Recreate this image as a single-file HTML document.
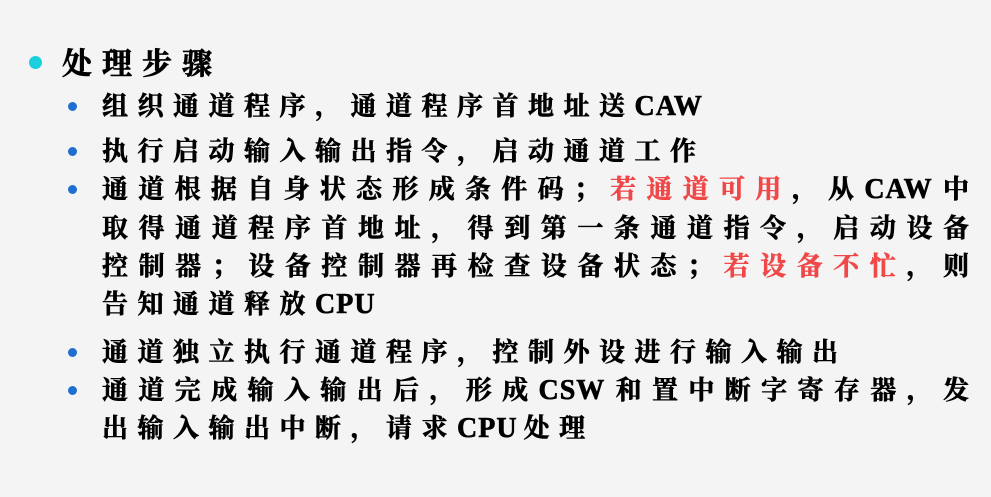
<!DOCTYPE html>
<html><head><meta charset="utf-8"><style>
html,body{margin:0;padding:0}
body{width:991px;height:497px;background:#f4f4f4;position:relative;overflow:hidden;font-family:"Liberation Serif","Noto Serif CJK SC",serif;font-weight:bold;color:#000}
.l{position:absolute;left:102px;height:38px;line-height:38px;font-size:26px;letter-spacing:9.5px;white-space:nowrap;-webkit-text-stroke:0.6px #000}
.j{width:873px;text-align:justify;text-align-last:justify;letter-spacing:6px}
.r{color:#f04848;-webkit-text-stroke:0.6px #f04848}
.e{letter-spacing:1px;margin-right:6px;font-size:28px}
.b{position:absolute;width:9px;height:9px;border-radius:50%;background:#1f6fd0;left:68px}
.t{position:absolute;left:62px;top:46px;height:38px;line-height:38px;font-size:30px;letter-spacing:10px;-webkit-text-stroke:0.7px #000}
.cb{position:absolute;left:29px;top:56px;width:13px;height:13px;border-radius:50%;background:#1ccfdc}
</style></head><body>
<div class="cb"></div>
<div class="t">处理步骤</div>
<div class="b" style="top:102px"></div>
<div class="l" style="top:88px">组织通道程序，通道程序首地址送<span class="e">CAW</span></div>
<div class="b" style="top:147px"></div>
<div class="l" style="top:133px">执行启动输入输出指令，启动通道工作</div>
<div class="b" style="top:185px"></div>
<div class="l j" style="top:171px">通道根据自身状态形成条件码；<span class="r">若通道可用</span>，从<span class="e">CAW</span>中</div>
<div class="l j" style="top:210px">取得通道程序首地址，得到第一条通道指令，启动设备</div>
<div class="l j" style="top:248px">控制器；设备控制器再检查设备状态；<span class="r">若设备不忙</span>，则</div>
<div class="l" style="top:286px">告知通道释放<span class="e">CPU</span></div>
<div class="b" style="top:348px"></div>
<div class="l" style="top:334px">通道独立执行通道程序，控制外设进行输入输出</div>
<div class="b" style="top:386px"></div>
<div class="l j" style="top:372px">通道完成输入输出后，形成<span class="e">CSW</span>和置中断字寄存器，发</div>
<div class="l" style="top:410px">出输入输出中断，请求<span class="e">CPU</span>处理</div>
</body></html>
